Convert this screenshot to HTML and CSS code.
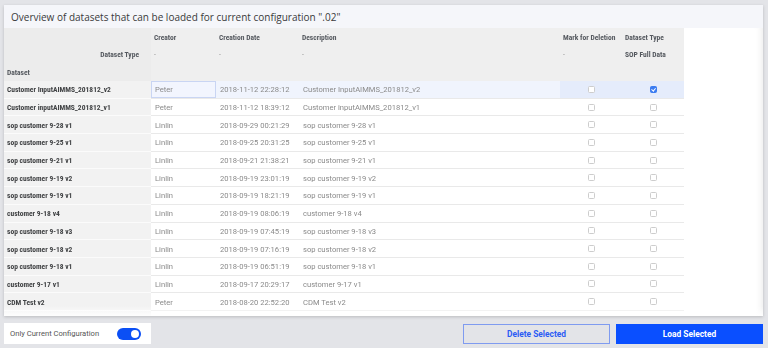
FILE: index.html
```html
<!DOCTYPE html>
<html lang="en">
<head>
	<title>Datasets</title>
	<meta charset="utf-8">
	<link rel="stylesheet" href="styles.css">
</head>
<body>

	<div class="screen">
		<section class="panel">
			<header class="panel-title">Overview of datasets that can be loaded for current configuration ".02"</header>

			<div class="table-area">
				<table class="datasets">
					<colgroup>
						<col class="c-name"><col class="c-creator"><col class="c-date"><col class="c-desc"><col class="c-mark"><col class="c-type">
					</colgroup>
					<thead>
						<tr>
							<th class="row-head"></th><th>Creator</th><th>Creation Date</th><th>Description</th><th>Mark for Deletion</th><th>Dataset Type</th>
						</tr>
						<tr>
							<th class="row-head align-right">Dataset Type</th><th class="dash">-</th><th class="dash">-</th><th class="dash">-</th><th class="dash">-</th><th>SOP Full Data</th>
						</tr>
						<tr>
							<th class="row-head">Dataset</th><th></th><th></th><th></th><th></th><th></th>
						</tr>
					</thead>
					<tbody>
						<tr class="selected">
							<th>Customer InputAIMMS_201812_v2</th><td class="focus">Peter</td><td>2018-11-12 22:28:12</td><td>Customer InputAIMMS_201812_v2</td>
							<td class="check"><span class="cb"></span></td><td class="check"><span class="cb on"></span></td>
						</tr>
						<tr>
							<th>Customer inputAIMMS_201812_v1</th><td>Peter</td><td>2018-11-12 18:39:12</td><td>Customer inputAIMMS_201812_v1</td>
							<td class="check"><span class="cb"></span></td><td class="check"><span class="cb"></span></td>
						</tr>
						<tr>
							<th>sop customer 9-28 v1</th><td>Linlin</td><td>2018-09-29 00:21:29</td><td>sop customer 9-28 v1</td>
							<td class="check"><span class="cb"></span></td><td class="check"><span class="cb"></span></td>
						</tr>
						<tr>
							<th>sop customer 9-25 v1</th><td>Linlin</td><td>2018-09-25 20:31:25</td><td>sop customer 9-25 v1</td>
							<td class="check"><span class="cb"></span></td><td class="check"><span class="cb"></span></td>
						</tr>
						<tr>
							<th>sop customer 9-21 v1</th><td>Linlin</td><td>2018-09-21 21:38:21</td><td>sop customer 9-21 v1</td>
							<td class="check"><span class="cb"></span></td><td class="check"><span class="cb"></span></td>
						</tr>
						<tr>
							<th>sop customer 9-19 v2</th><td>Linlin</td><td>2018-09-19 23:01:19</td><td>sop customer 9-19 v2</td>
							<td class="check"><span class="cb"></span></td><td class="check"><span class="cb"></span></td>
						</tr>
						<tr>
							<th>sop customer 9-19 v1</th><td>Linlin</td><td>2018-09-19 18:21:19</td><td>sop customer 9-19 v1</td>
							<td class="check"><span class="cb"></span></td><td class="check"><span class="cb"></span></td>
						</tr>
						<tr>
							<th>customer 9-18 v4</th><td>Linlin</td><td>2018-09-19 08:06:19</td><td>customer 9-18 v4</td>
							<td class="check"><span class="cb"></span></td><td class="check"><span class="cb"></span></td>
						</tr>
						<tr>
							<th>sop customer 9-18 v3</th><td>Linlin</td><td>2018-09-19 07:45:19</td><td>sop customer 9-18 v3</td>
							<td class="check"><span class="cb"></span></td><td class="check"><span class="cb"></span></td>
						</tr>
						<tr>
							<th>sop customer 9-18 v2</th><td>Linlin</td><td>2018-09-19 07:16:19</td><td>sop customer 9-18 v2</td>
							<td class="check"><span class="cb"></span></td><td class="check"><span class="cb"></span></td>
						</tr>
						<tr>
							<th>sop customer 9-18 v1</th><td>Linlin</td><td>2018-09-19 06:51:19</td><td>sop customer 9-18 v1</td>
							<td class="check"><span class="cb"></span></td><td class="check"><span class="cb"></span></td>
						</tr>
						<tr>
							<th>customer 9-17 v1</th><td>Linlin</td><td>2018-09-17 20:29:17</td><td>customer 9-17 v1</td>
							<td class="check"><span class="cb"></span></td><td class="check"><span class="cb"></span></td>
						</tr>
						<tr>
							<th>CDM Test v2</th><td>Peter</td><td>2018-08-20 22:52:20</td><td>CDM Test v2</td>
							<td class="check"><span class="cb"></span></td><td class="check"><span class="cb"></span></td>
						</tr>
						<tr class="clipped">
							<th>CDM Test v1</th><td>Peter</td><td>2018-08-20 22:23:51</td><td>CDM Test v1</td>
							<td class="check"><span class="cb"></span></td><td class="check"><span class="cb"></span></td>
						</tr>
					</tbody>
				</table>
				<div class="fade"></div>
			</div>
		</section>

		<footer class="actions">
			<label class="toggle-card">
				<span>Only Current Configuration</span>
				<span class="switch"></span>
			</label>
			<div class="buttons">
				<button class="btn btn-outline">Delete Selected</button>
				<button class="btn btn-primary">Load Selected</button>
			</div>
		</footer>
	</div>

</body>
</html>
```

FILE: styles.css
```css
html, body {
	margin: 0;
	padding: 0;
	height: 100%;
	background: #e3e4e8;
	font-family: Roboto, "Liberation Sans", sans-serif;
	-webkit-font-smoothing: antialiased;
}

* {
	box-sizing: border-box;
}

.screen {
	padding: 5px 5px 0 4px;
}

/* Panel */

.panel {
	height: 311px;
	background: #fff;
	display: flex;
	flex-direction: column;
	box-shadow: 0 1px 3px rgba(0,0,0,.18);
	overflow: hidden;
}

.panel-title {
	height: 23px;
	flex: none;
	background: #f5f6fa;
	padding: 1px 0 0 7px;
	display: flex;
	align-items: center;
	font-family: "Open Sans", Lato, sans-serif;
	font-size: 10px;
	color: #3a3a3a;
}

.table-area {
	flex: 1;
	position: relative;
	overflow: hidden;
	background: #fff;
	box-shadow: inset -7px 0 6px -5px rgba(0,0,0,.07);
	will-change: transform;
}

.fade {
	position: absolute;
	left: 0;
	right: 0;
	bottom: 0;
	height: 10px;
	background: linear-gradient(rgba(255,255,255,0), rgba(255,255,255,.92));
}

/* Table */

.datasets {
	width: 680px;
	table-layout: fixed;
	border-collapse: collapse;
	border-spacing: 0;
}

.c-name { width: 147px; }
.c-creator { width: 65px; }
.c-date { width: 83px; }
.c-desc { width: 261px; }
.c-mark { width: 62px; }
.c-type { width: 62px; }

.datasets th,
.datasets td {
	height: 17.7px;
	padding: 0 4px;
	white-space: nowrap;
	overflow: hidden;
	text-align: left;
	vertical-align: middle;
}

.datasets thead th {
	background: #efefef;
	height: 17.5px;
	padding-top: 1px;
	font-family: "Roboto Condensed", "Liberation Sans Narrow", "DejaVu Sans Condensed", Roboto, sans-serif;
	font-weight: 700;
	font-size: 7.5px;
	color: #55595f;
	padding-left: 3px;
}

.datasets thead th.row-head {
	background: #ececec;
}

.datasets thead th.align-right {
	text-align: right;
	padding-right: 12px;
}

.datasets thead th.dash {
	font-weight: 400;
	color: #888;
}

.datasets tbody th {
	background: #f2f2f2;
	border-bottom: 1px solid #fbfbfb;
	padding-top: 1px;
	font-family: "Roboto Condensed", "Liberation Sans Narrow", "DejaVu Sans Condensed", Roboto, sans-serif;
	font-weight: 700;
	font-size: 7.5px;
	color: #404244;
	padding-left: 3px;
}

.datasets tbody td {
	border-bottom: 1px solid #e9e9e9;
	padding-top: 1px;
	font-size: 7.6px;
	color: #8a8a8a;
}

.datasets tbody tr.clipped th,
.datasets tbody tr.clipped td {
	border-bottom: none;
	color: #d8d8d8;
}

.datasets tbody td.check {
	text-align: center;
	padding: 0;
	line-height: 0;
}

.datasets tr.selected td {
	background: #f0f4fd;
}

.datasets tr.selected td.check {
	background: #e5ecfb;
}

.datasets tr.selected td.focus {
	background: #f2f5fe;
	box-shadow: inset 0 0 0 1px #c9d5f3;
}

.cb {
	display: inline-block;
	width: 7px;
	height: 7px;
	border: 1px solid #cdcdcd;
	border-radius: 1.5px;
	background: #fff;
	position: relative;
}

.cb.on {
	background: #3b7cf1;
	border-color: #3b7cf1;
}

.cb.on::after {
	content: '';
	position: absolute;
	left: 1.6px;
	top: 0.2px;
	width: 1.6px;
	height: 3.4px;
	border: solid #fff;
	border-width: 0 1px 1px 0;
	transform: rotate(40deg);
}

/* Footer */

.actions {
	display: flex;
	justify-content: space-between;
	align-items: center;
	padding-top: 7px;
}

.toggle-card {
	width: 147px;
	height: 21px;
	background: #fff;
	display: flex;
	align-items: center;
	justify-content: space-between;
	padding: 0 10px 0 6px;
	font-size: 7.6px;
	color: #555;
}

.switch {
	width: 24px;
	height: 12px;
	border-radius: 6px;
	background: #0b4ff5;
	position: relative;
}

.switch::after {
	content: '';
	position: absolute;
	right: 2px;
	top: 2px;
	width: 8px;
	height: 8px;
	border-radius: 50%;
	background: #fff;
}

.buttons {
	display: flex;
	gap: 6px;
}

.btn {
	width: 147px;
	height: 20px;
	margin: 0;
	font-family: Roboto, sans-serif;
	font-weight: 700;
	font-size: 8.4px;
	cursor: pointer;
	padding: 0;
}

.btn-outline {
	background: transparent;
	border: 1px solid #7f9bf0;
	color: #2c5cf4;
}

.btn-primary {
	background: #0a4fff;
	border: 1px solid #0a4fff;
	color: #fff;
}
```
